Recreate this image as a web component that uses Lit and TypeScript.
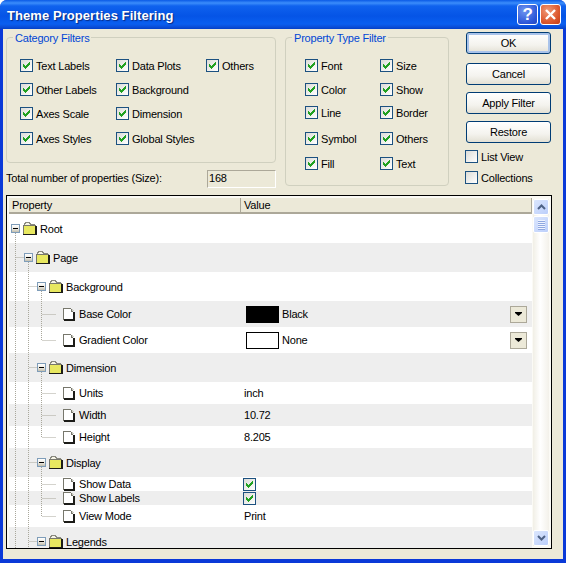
import { LitElement, html, css, svg } from "lit";
import { customElement } from "lit/decorators.js";

type Row = {
  depth: number;
  kind: "folder" | "leaf";
  label: string;
  h: number;
  value?: string;
  swatch?: string;
  check?: boolean;
};

const ROWS: Row[] = [
  { depth: 0, kind: "folder", label: "Root", h: 29 },
  { depth: 1, kind: "folder", label: "Page", h: 29 },
  { depth: 2, kind: "folder", label: "Background", h: 29 },
  { depth: 3, kind: "leaf", label: "Base Color", h: 26, swatch: "#000", value: "Black" },
  { depth: 3, kind: "leaf", label: "Gradient Color", h: 26, swatch: "#fff", value: "None" },
  { depth: 2, kind: "folder", label: "Dimension", h: 29 },
  { depth: 3, kind: "leaf", label: "Units", h: 22, value: "inch" },
  { depth: 3, kind: "leaf", label: "Width", h: 22, value: "10.72" },
  { depth: 3, kind: "leaf", label: "Height", h: 22, value: "8.205" },
  { depth: 2, kind: "folder", label: "Display", h: 29 },
  { depth: 3, kind: "leaf", label: "Show Data", h: 14, check: true },
  { depth: 3, kind: "leaf", label: "Show Labels", h: 14, check: true },
  { depth: 3, kind: "leaf", label: "View Mode", h: 22, value: "Print" },
  { depth: 2, kind: "folder", label: "Legends", h: 29 },
];

const CATEGORY = ["Text Labels", "Data Plots", "Others", "Other Labels", "Background", "", "Axes Scale", "Dimension", "", "Axes Styles", "Global Styles", ""];
const TYPES = ["Font", "Size", "Color", "Show", "Line", "Border", "Symbol", "Others", "Fill", "Text"];

const checkMark = svg`<path shape-rendering="crispEdges" d="M2 4h1v3h-1zM3 5h1v3h-1zM4 6h1v3h-1zM5 5h1v3h-1zM6 4h1v3h-1zM7 3h1v3h-1zM8 2h1v3h-1z" fill="#21a121"/>`;

const folderIcon = html`<svg class="ico" width="14" height="13" viewBox="0 0 14 13" shape-rendering="crispEdges">
  <path d="M2 1H7V2H8V3H12V4H2Z" fill="#f6f4e6"/>
  <path d="M1 3V1H2V0H7V1H8V2H12V3H7V2H6V1H3V2H2V3Z" fill="#8a8a80"/>
  <rect x="1" y="4" width="11" height="8" fill="#e8e860"/>
  <path d="M0 3H13V4H1V12H0Z" fill="#77776c"/>
  <path d="M12 4H14V13H0V12H12Z" fill="#1c1c18"/>
</svg>`;

const pageIcon = html`<svg class="ico" width="12" height="13" viewBox="0 0 12 13" shape-rendering="crispEdges">
  <path d="M1 1 H8 V2H9V3H10 V11 H1 Z" fill="#fff"/>
  <path d="M0 0H8V1H1V12H0ZM8 1H9V3H10V4H8Z" fill="#77776c"/>
  <path d="M9 1H10V2H11V3H9Z" fill="#cfcfc6"/>
  <path d="M10 4H12V13H1V11H10Z" fill="#1c1c18"/>
</svg>`;

function box(checked: boolean, extra = "") {
  return html`<span class="box ${extra}">${checked
    ? html`<svg width="11" height="11" viewBox="0 0 11 11">${checkMark}</svg>`
    : ""}</span>`;
}

@customElement("app-root")
export class AppRoot extends LitElement {
  static styles = css`
    :host {
      display: block;
      width: 566px;
      height: 563px;
      font: 11px "Liberation Sans", Arial, sans-serif;
      letter-spacing: -0.2px;
      color: #000;
      background: #fff;
    }
    .win {
      box-sizing: border-box;
      width: 566px;
      height: 563px;
      display: flex;
      flex-direction: column;
      border-radius: 7px 7px 0 0;
      overflow: hidden;
      background: #0a39d8;
    }
    .title {
      height: 29px;
      flex: none;
      display: flex;
      align-items: center;
      padding: 0 5px 0 7px;
      background: linear-gradient(#0a5ae6 0, #3b8dfb 3px, #0f62ee 6px, #0554e6 16px, #0a5ff0 24px, #0b4ed8 27px, #0340c8 29px);
    }
    .title h1 {
      margin: 0;
      padding-top: 1px;
      flex: 1;
      font: bold 13px "Liberation Sans", Arial, sans-serif;
      letter-spacing: 0.07px;
      color: #fff;
      text-shadow: 1px 1px 1px #0a2a80;
    }
    .wbtn {
      box-sizing: border-box;
      width: 21px;
      height: 21px;
      margin-left: 2px;
      border: 1px solid #fff;
      border-radius: 3px;
      display: flex;
      align-items: center;
      justify-content: center;
      color: #fff;
      font: bold 17px "Liberation Sans", sans-serif;
    }
    .help { background: radial-gradient(circle at 35% 30%, #6f96f0, #2c56d8 70%, #2347c0); }
    .close { background: radial-gradient(circle at 35% 30%, #f09a78, #dd5a30 60%, #c23a15); }
    .client {
      flex: 1;
      min-height: 0;
      margin: 0 3px 4px;
      background: #ece9d8;
      display: flex;
      flex-direction: column;
      padding-bottom: 10px;
    }
    .top {
      height: 166px;
      flex: none;
      display: flex;
      box-sizing: border-box;
      padding: 3px 0 0 3px;
    }
    .left {
      width: 270px;
      padding-top: 5px;
      margin-right: 9px;
    }
    .group {
      box-sizing: border-box;
      border: 1px solid #d0d0bf;
      border-radius: 4px;
    }
    .cat { height: 126px; }
    .prop {
      width: 164px;
      height: 149px;
      margin: 5px 17px 0 0;
    }
    .legend {
      width: fit-content;
      height: 14px;
      line-height: 14px;
      margin: -7px 0 0 6px;
      padding: 0 2px;
      background: #ece9d8;
      color: #0046d5;
    }
    .grid {
      display: grid;
      align-items: start;
      padding-top: 14px;
    }
    .cat .grid {
      padding-left: 13px;
      grid-template-columns: 96px 90px 60px;
      grid-template-rows: 24px 24px 25px 25px;
    }
    .prop .grid {
      padding-left: 19px;
      grid-template-columns: 75px 70px;
      grid-template-rows: 24px 23px 26px 25px 20px;
    }
    .chk {
      display: flex;
      align-items: center;
      gap: 3px;
      height: 13px;
      white-space: nowrap;
    }
    .box {
      box-sizing: border-box;
      flex: none;
      width: 13px;
      height: 13px;
      border: 1px solid #1c5180;
      background: linear-gradient(135deg, #dcdcd7, #fff);
      display: inline-flex;
    }
    .total {
      display: flex;
      justify-content: space-between;
      align-items: flex-start;
      margin: 7px 0 0 0;
      height: 18px;
      line-height: 16px;
    }
    .ro {
      box-sizing: border-box;
      width: 69px;
      height: 18px;
      padding-left: 1px;
      line-height: 14px;
      border: 1px solid;
      border-color: #aca899 #fff #fff #aca899;
    }
    .right {
      width: 85px;
      display: flex;
      flex-direction: column;
    }
    .btn {
      box-sizing: border-box;
      height: 22px;
      flex: none;
      margin-bottom: 7px;
      border: 1px solid #003c74;
      border-radius: 3px;
      background: linear-gradient(#fff, #f4f3ee 60%, #e3e0d4);
      display: flex;
      align-items: center;
      justify-content: center;
    }
    .btn.def { box-shadow: inset 0 0 0 2px #a9c3ea; margin-bottom: 9px; }
    .right .chk { margin-left: -1px; height: 13px; margin-bottom: 8px; }
    .tree {
      box-sizing: border-box;
      margin-left: 3px;
      width: 546px;
      flex: 1;
      min-height: 0;
      border: 1px solid #000;
      padding: 2px 2px 0 2px;
      display: flex;
      background: #fbfaf5;
    }
    .main {
      width: 523px;
      display: flex;
      flex-direction: column;
      min-height: 0;
    }
    .head {
      flex: none;
      height: 14px;
      display: grid;
      grid-template-columns: 231px 1fr;
      background: #ece9d8;
      border-bottom: 2px solid #aca899;
      border-right: 1px solid #aca899;
      line-height: 14px;
    }
    .head span { padding-left: 3px; }
    .head span + span { border-left: 1px solid #aca899; }
    .rows {
      position: relative;
      flex: 1;
      min-height: 0;
      overflow: hidden;
      background: #fff;
    }
    .row {
      display: grid;
      grid-template-columns: 231px 1fr;
      align-items: center;
      overflow: hidden;
    }
    .row.alt { background: #eeeeee; }
    .name {
      display: flex;
      align-items: center;
      gap: 3px;
      white-space: nowrap;
    }
    .name.leaf { gap: 4px; }
    .ico { flex: none; display: block; }
    .exp {
      box-sizing: border-box;
      flex: none;
      width: 9px;
      height: 9px;
      border: 1px solid #7f9db9;
      background: linear-gradient(#fff, #ece9e0 55%, #c2beae);
      display: flex;
      align-items: center;
      justify-content: center;
    }
    .exp::after { content: ""; width: 5px; height: 1px; background: #000; }
    .val {
      display: flex;
      align-items: center;
      padding-left: 4px;
      height: 100%;
    }
    .val .box { margin-left: -1px; }
    .swatch {
      box-sizing: border-box;
      width: 33px;
      height: 17px;
      margin: 0 3px 0 2px;
      border: 1px solid #000;
    }
    .dd {
      box-sizing: border-box;
      width: 17px;
      height: 17px;
      margin-left: auto;
      margin-right: 5px;
      border: 1px solid;
      border-color: #fff #aca899 #aca899 #fff;
      outline: 1px solid #aca899;
      outline-offset: -1px;
      background: #ece9d8;
      display: flex;
      align-items: center;
      justify-content: center;
    }
    .lines {
      position: absolute;
      left: 0;
      top: 0;
      pointer-events: none;
    }
    .lines line { stroke: #a9a79b; stroke-dasharray: 1 1; }
    .bar {
      flex: none;
      width: 16px;
      margin: 1px 0 2px 1px;
      display: flex;
      flex-direction: column;
      background: linear-gradient(90deg, #f1efe6, #fff 45%, #f3f1ea);
    }
    .sb {
      box-sizing: border-box;
      flex: none;
      height: 16px;
      border: 1px solid #fff;
      border-radius: 2px;
      background: linear-gradient(135deg, #dbe6fd, #bccffb);
      display: flex;
      align-items: center;
      justify-content: center;
    }
    .thumb { margin-top: 1px; flex-direction: column; gap: 1px; height: 17px; }
    .thumb i { display: block; width: 7px; height: 1px; background: #eef3ff; border-bottom: 1px solid #8fa8e0; margin-bottom: -1px; }
    .spacer { flex: 1; }
  `;

  private lines() {
    const out: unknown[] = [];
    const XE = [6.5, 19.5, 32.5]; // centre of expander per depth
    const ys: number[] = [];
    let y = 0;
    for (const r of ROWS) { ys.push(y + r.h / 2); y += r.h; }
    ROWS.forEach((r, i) => {
      if (r.depth === 0) return;
      const px = XE[r.depth - 1];
      const end = r.kind === "leaf" ? 47 : r.depth === 1 ? 15 : 28;
      const ly = Math.floor(ys[i]) + 0.5;
      out.push(svg`<line x1=${px + 1} x2=${end} y1=${ly} y2=${ly}></line>`);
    });
    // vertical guides: from a folder to its last direct child
    ROWS.forEach((r, i) => {
      if (r.kind !== "folder") return;
      let last = -1;
      for (let j = i + 1; j < ROWS.length && ROWS[j].depth > r.depth; j++) {
        if (ROWS[j].depth === r.depth + 1) last = j;
      }
      if (last < 0) return;
      const x = XE[r.depth];
      const y2 = r.depth < 2 ? y : Math.floor(ys[last]) + 1;
      out.push(svg`<line x1=${x} x2=${x} y1=${Math.floor(ys[i]) + 5} y2=${y2}></line>`);
    });
    return html`<svg class="lines" width="100" height=${y}>${out}</svg>`;
  }

  private row(r: Row, i: number) {
    const left = r.kind === "leaf" ? 54 : 2 + 13 * r.depth;
    return html`<div class="row ${i % 2 ? "alt" : ""}" style="height:${r.h}px">
      <div class="name ${r.kind}" style="padding-left:${left}px">
        ${r.kind === "folder" ? html`<span class="exp"></span>${folderIcon}` : pageIcon}
        <span>${r.label}</span>
      </div>
      <div class="val">
        ${r.swatch ? html`<span class="swatch" style="background:${r.swatch}"></span>` : ""}
        ${r.check ? box(true) : ""}
        ${r.value ?? ""}
        ${r.swatch
          ? html`<span class="dd"><svg width="7" height="4" viewBox="0 0 7 4"><path d="M0 0H7V1L3.5 4L0 1Z"/></svg></span>`
          : ""}
      </div>
    </div>`;
  }

  render() {
    return html`<div class="win">
      <div class="title">
        <h1>Theme Properties Filtering</h1>
        <span class="wbtn help">?</span>
        <span class="wbtn close"><svg width="13" height="13" viewBox="0 0 13 13"><path d="M2 2L11 11M11 2L2 11" stroke="#fff" stroke-width="2.4"/></svg></span>
      </div>
      <div class="client">
        <div class="top">
          <div class="left">
            <div class="group cat">
              <div class="legend">Category Filters</div>
              <div class="grid">
                ${CATEGORY.map((c) => c ? html`<label class="chk">${box(true)}${c}</label>` : html`<span></span>`)}
              </div>
            </div>
            <div class="total">
              <span>Total number of properties (Size):</span>
              <span class="ro">168</span>
            </div>
          </div>
          <div class="group prop">
            <div class="legend">Property Type Filter</div>
            <div class="grid">
              ${TYPES.map((c) => html`<label class="chk">${box(true)}${c}</label>`)}
            </div>
          </div>
          <div class="right">
            <div class="btn def">OK</div>
            <div class="btn">Cancel</div>
            <div class="btn">Apply Filter</div>
            <div class="btn">Restore</div>
            <label class="chk">${box(false)}List View</label>
            <label class="chk">${box(false)}Collections</label>
          </div>
        </div>
        <div class="tree">
          <div class="main">
            <div class="head"><span>Property</span><span>Value</span></div>
            <div class="rows">
              ${ROWS.map((r, i) => this.row(r, i))}
              ${this.lines()}
            </div>
          </div>
          <div class="bar">
            <div class="sb"><svg width="9" height="6" viewBox="0 0 9 6"><path d="M1 5L4.5 1.5L8 5" fill="none" stroke="#4d6185" stroke-width="2"/></svg></div>
            <div class="sb thumb"><i></i><i></i><i></i><i></i><i></i></div>
            <div class="spacer"></div>
            <div class="sb"><svg width="9" height="6" viewBox="0 0 9 6"><path d="M1 1L4.5 4.5L8 1" fill="none" stroke="#4d6185" stroke-width="2"/></svg></div>
          </div>
        </div>
      </div>
    </div>`;
  }
}
